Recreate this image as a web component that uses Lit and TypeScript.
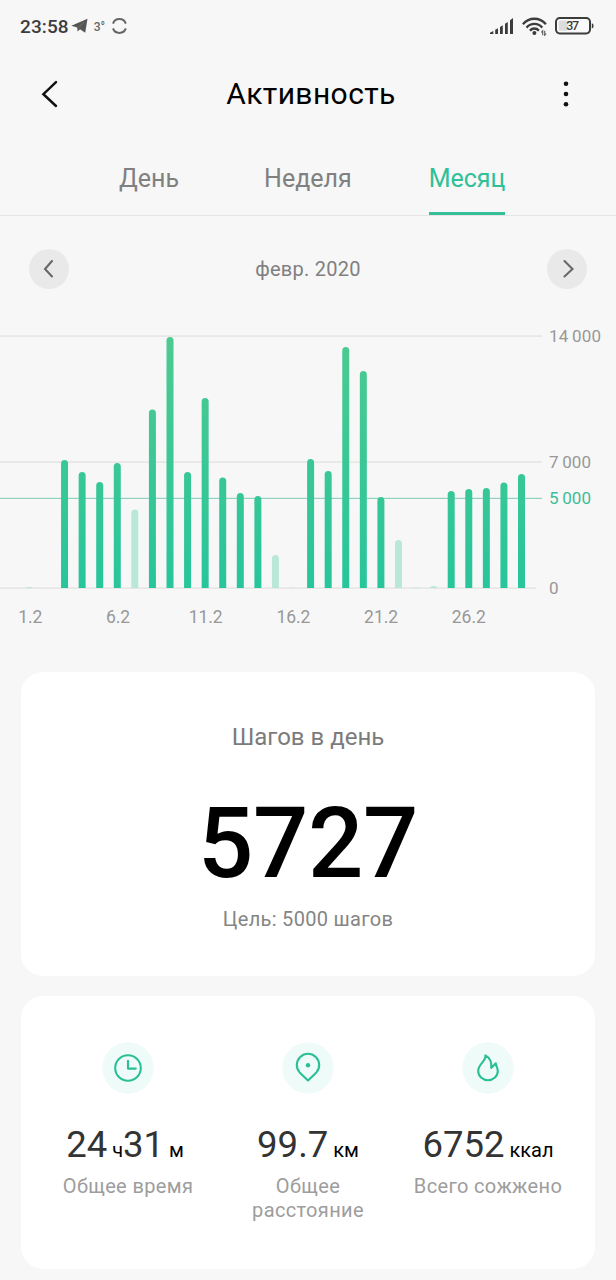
import { LitElement, html, svg, css } from "lit";
import { customElement, property, state } from "lit/decorators.js";
import { classMap } from "lit/directives/class-map.js";

@customElement("status-bar")
class StatusBar extends LitElement {
  static styles = css`
    :host { display: flex; justify-content: space-between; height: 52px; padding: 0 22px 0 20px; color: #3c3c3c; }
    .side { display: flex; align-items: center; }
    .time { font: 500 19px/22px Roboto, sans-serif; letter-spacing: 0.1px; padding-top: 2px; }
    .temp { font: 500 12px/14px Roboto, sans-serif; color: #666; margin: 1px 7px 0 6px; }
    .plane { margin: 0 0 0 2px; }
    .signal { margin-right: 8px; }
    .wifi { margin-right: 8px; }
    svg { display: block; }
    .num { font: 500 12.5px Roboto, sans-serif; fill: #3c3c3c; }
  `;
  render() {
    return html`
      <div class="side">
        <span class="time">23:58</span>
        <svg class="plane" width="17" height="16" viewBox="0 0 17 16">
          <path d="M.3 7.7 16.5.8 14.2 14.8 9 11.3 6.6 13.6 6.2 9.6Z" fill="#555" />
          <path d="M6.3 9.6 13 4.2 7.8 10.4" fill="none" stroke="#777" stroke-width=".5" />
        </svg>
        <span class="temp">3°</span>
        <svg width="15" height="16" viewBox="0 0 15 16" fill="none" stroke="#666" stroke-width="2">
          <path d="M1 5.6A6.7 6.4 0 0 1 13.8 5.6M1 10.4A6.7 6.4 0 0 0 13.8 10.4" />
        </svg>
      </div>
      <div class="side">
        <svg class="signal" width="24" height="18" viewBox="0 0 24 18" fill="#3c3c3c">
          <path d="M0 17v-1.3l3.3-1.7v3zM5.2 12.7 8 11.2V17H5.2zM10 10 12.8 8.3V17H10zM15 6.8 17.8 5V17H15zM20 3.2 23 1V17h-3z" />
        </svg>
        <svg class="wifi" width="25" height="19" viewBox="0 0 25 19">
          <g fill="none" stroke="#3c3c3c" stroke-width="2.3">
            <path d="M.9 7.2C7.4-.1 17.4-.1 23.9 7.2" />
            <path d="M4.5 10.6C9 5.7 15.8 5.7 20.3 10.6" />
            <path d="M7.9 13.6C10.5 10.8 14.3 10.8 16.9 13.6" />
          </g>
          <circle cx="12.4" cy="16" r="2" fill="#3c3c3c" />
          <path d="M20.7 18.3v-4.5l-1.4 1.6M22.7 13.8v4.5l1.4-1.6" fill="none" stroke="#666" stroke-width="1.2" />
        </svg>
        <svg width="39" height="18" viewBox="0 0 39 18">
          <rect x="1" y="1" width="34" height="15.4" rx="3.8" fill="#fafafa" stroke="#3c3c3c" stroke-width="2" />
          <rect x="3.7" y="3.6" width="9" height="10.2" rx="1" fill="#dcdcdc" />
          <path d="M36.8 6.2q1.8 0 1.8 2.6t-1.8 2.6z" fill="#3c3c3c" />
          <text class="num" x="17.7" y="13.2" text-anchor="middle" textLength="13">37</text>
        </svg>
      </div>
    `;
  }
}

const STEPS = [
  60, 0, 7110, 6440, 5890, 6940, 4360, 9920, 13950, 6440, 10560, 6140, 5280, 5110, 1830, 25, 7170, 6500,
  13390, 12060, 5060, 2670, 25, 110, 5390, 5500, 5560, 5860, 6330,
];

@customElement("steps-chart")
class StepsChart extends LitElement {
  @property({ attribute: false }) steps: number[] = STEPS;
  @property({ type: Number }) goal = 5000;

  static styles = css`
    :host { display: block; height: 320px; }
    svg { display: block; }
    text { font: 400 17px Roboto, sans-serif; fill: #989898; }
    .goal { fill: #3dbd96; }
    .day { font-size: 17.5px; }
  `;

  private y(v: number) {
    return 268 - (v / 14000) * 252;
  }

  private bar(v: number, i: number) {
    if (!v) return null;
    const cx = 29.4 + i * 17.575;
    const top = this.y(v);
    const r = Math.min(3.5, 268 - top);
    return svg`<path
      d="M${cx - 3.5} 268V${top + r}a3.5 ${r} 0 0 1 7 0V268Z"
      fill=${v >= this.goal ? "url(#bar)" : "#b9e8d8"}
    />`;
  }

  private label(v: number) {
    return String(v).replace(/(\d)(\d{3})$/, "$1\u2009$2");
  }

  render() {
    return html`
      <svg width="616" height="320" viewBox="0 0 616 320">
        <defs>
          <linearGradient id="bar" gradientUnits="userSpaceOnUse" x1="0" y1="268" x2="0" y2="16">
            <stop offset="0" stop-color="#28c59b" />
            <stop offset="1" stop-color="#4dca91" />
          </linearGradient>
        </defs>
        ${[14000, 7000, 0].map(
          (v) => svg`<rect x="0" y=${this.y(v) - 0.5} width=${v ? 542 : 536} height="1.2" fill="#e0e0e0" />
            <text x="549" y=${this.y(v) + 6} textLength=${v === 14000 ? 52 : v ? 42 : 9}>${this.label(v)}</text>`,
        )}
        <rect x="0" y=${this.y(this.goal) - 0.2} width="542" height="1.1" fill="#86cfb7" />
        <text class="goal" x="549" y=${this.y(this.goal) + 6} textLength="42">${this.label(this.goal)}</text>
        ${this.steps.map((v, i) => this.bar(v, i))}
        ${[1, 6, 11, 16, 21, 26].map(
          (d) => svg`<text class="day" x=${30.3 + (d - 1) * 17.54} y="303" text-anchor="middle"
            textLength=${d < 10 ? 24 : 34}>${d}.2</text>`,
        )}
      </svg>
    `;
  }
}

const ICONS = {
  clock: svg`<circle cx="26" cy="26" r="12.8" /><path d="M26 18.8V26.6H33.8" />`,
  pin: svg`<path d="M26 38.6 17.6 30.4A11.2 11.2 0 1 1 34.4 30.4Z" /><circle class="dot" cx="26" cy="23.2" r="2.2" />`,
  flame: svg`<path d="M23.4 13.4C24.4 19.3 16.2 21.8 16.2 29A9.8 9.3 0 0 0 35.8 29C35.8 26 34.1 24.2 33.8 21.4C32.2 22.6 31 24.8 29.2 25.8C29.8 20.8 28.9 16.4 23.4 13.4Z" />`,
};

@customElement("app-root")
class AppRoot extends LitElement {
  @state() private active = "Месяц";

  static styles = css`
    :host { display: block; width: 616px; height: 1280px; overflow: hidden; background: #f7f7f7; font-family: Roboto, sans-serif; }
    * { box-sizing: border-box; }
    svg { display: block; }
    header { display: flex; justify-content: space-between; align-items: center; height: 84px; padding: 0 47px 0 41px; }
    h1 { margin: 0; font-size: 30px; line-height: 36px; font-weight: 400; color: #000; letter-spacing: 0.4px; }
    nav { display: flex; height: 80px; border-bottom: 1px solid #e5e5e5; padding-left: 119px; gap: 85px; }
    .tab { height: 79px; padding-top: 27px; font-size: 25px; line-height: 32px; color: #808080; white-space: nowrap; }
    .tab.active { color: #2fc097; border-bottom: 3px solid #34bf99; margin-left: -8px; }
    .month { display: flex; align-items: center; justify-content: space-between; height: 104px; padding: 2px 28.5px 0; color: #808080; font-size: 20px; line-height: 24px; letter-spacing: 0.25px; }
    .circle { display: flex; align-items: center; justify-content: center; width: 40px; height: 40px; border-radius: 50%; background: #e9e9e9; }
    .card { margin: 0 21px 20px; background: #fff; border-radius: 22px; }
    .average { height: 304px; margin-top: 32px; text-align: center; padding-top: 50px; }
    .caption { font-size: 24px; line-height: 30px; color: #7b7b7b; }
    .total { font-size: 97.5px; line-height: 116px; font-weight: 500; color: #000; margin-top: 34px; letter-spacing: -0.4px; }
    .target { font-size: 20px; line-height: 24px; color: #858585; margin-top: 5px; letter-spacing: 0.3px; }
    .stats { display: grid; grid-template-columns: repeat(3, 180px); justify-content: center; height: 273px; padding-top: 46px; }
    .stat { display: flex; flex-direction: column; align-items: center; text-align: center; }
    .icon { fill: none; stroke: #2cbf96; stroke-width: 2.1; stroke-linejoin: round; stroke-linecap: round; }
    .halo { fill: #effbf8; stroke: none; }
    .dot { fill: #2cbf96; stroke: none; }
    .value { display: flex; align-items: baseline; margin-top: 29px; font-size: 36.5px; line-height: 44px; color: #333; white-space: pre; }
    .unit { font-size: 20px; color: #000; }
    .unit:nth-child(4) { margin-right: 6px; }
    .name { margin-top: 2px; width: 156px; font-size: 20px; line-height: 24px; color: #9d9d9d; letter-spacing: 0.35px; }
  `;

  private stats = [
    { icon: ICONS.clock, parts: [["24", " ч"], ["31", " м"]], name: "Общее время" },
    { icon: ICONS.pin, parts: [["99.7", " км"]], name: "Общее расстояние" },
    { icon: ICONS.flame, parts: [["6752", " ккал"]], name: "Всего сожжено" },
  ];

  render() {
    return html`
      <status-bar></status-bar>
      <header>
        <svg width="18" height="28" viewBox="0 0 18 28" fill="none" stroke="#111" stroke-width="2.5" stroke-linecap="round">
          <path d="M15 2.2 2.4 14.2 15 26" />
        </svg>
        <h1>Активность</h1>
        <svg width="6" height="28" viewBox="0 0 6 28" fill="#111">
          <circle cx="3" cy="3.7" r="2.3" /><circle cx="3" cy="14" r="2.3" /><circle cx="3" cy="24.3" r="2.3" />
        </svg>
      </header>
      <nav>
        ${["День", "Неделя", "Месяц"].map(
          (t) => html`<div class=${classMap({ tab: true, active: t === this.active })} @click=${() => (this.active = t)}>${t}</div>`,
        )}
      </nav>
      <div class="month">
        <div class="circle">
          <svg width="14" height="20" viewBox="0 0 14 20" fill="none" stroke="#686868" stroke-width="2.1" stroke-linecap="round">
            <path d="M10 2 3 10 10 17.5" />
          </svg>
        </div>
        <span>февр. 2020</span>
        <div class="circle">
          <svg width="14" height="20" viewBox="0 0 14 20" fill="none" stroke="#686868" stroke-width="2.1" stroke-linecap="round">
            <path d="M4.5 2 12.5 10 4.5 17.5" />
          </svg>
        </div>
      </div>
      <steps-chart></steps-chart>
      <section class="card average">
        <div class="caption">Шагов в день</div>
        <div class="total">5727</div>
        <div class="target">Цель: 5000 шагов</div>
      </section>
      <section class="card stats">
        ${this.stats.map(
          (s) => html`<div class="stat">
            <svg class="icon" width="52" height="52" viewBox="0 0 52 52"><circle class="halo" cx="26" cy="26" r="25.7" />${s.icon}</svg>
            <div class="value">${s.parts.map(([n, u]) => html`<span>${n}</span><span class="unit">${u}</span>`)}</div>
            <div class="name">${s.name}</div>
          </div>`,
        )}
      </section>
    `;
  }
}
